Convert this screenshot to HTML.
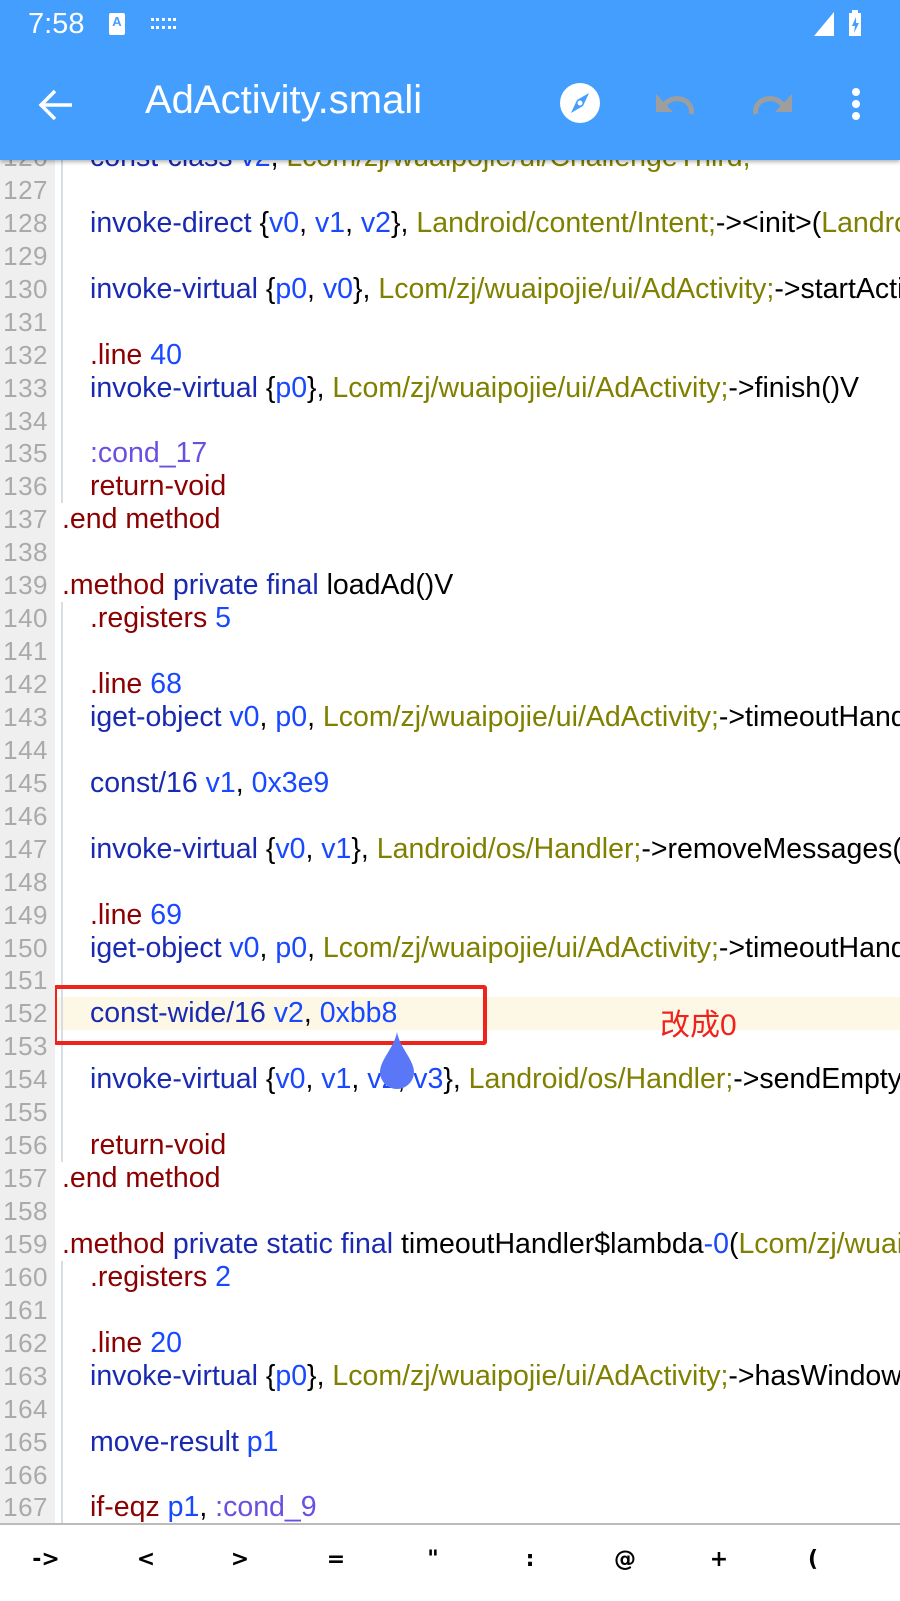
<!DOCTYPE html>
<html><head><meta charset="utf-8"><style>
body{margin:0;width:900px;height:1599px;overflow:hidden;background:#fff;font-family:"Liberation Sans","Noto Sans CJK SC",sans-serif;position:relative}
#code{position:absolute;left:0;top:141px;width:900px;overflow:hidden}
.ln{height:32.94px;line-height:32.94px;position:relative;white-space:nowrap;font-size:28.5px;overflow:hidden}
.n{position:absolute;left:0;width:55px;height:100%;background:#efefef;color:#aaa;font-size:26px;text-align:right;padding-right:7px;box-sizing:border-box;letter-spacing:0.5px;z-index:1}
.c{position:absolute;left:62px}
.i{left:90px}
.g:after{content:"";position:absolute;left:61px;top:0;width:2px;height:100%;background:#d6dde3}
.k{color:#1a2ab0}.r{color:#1848ff}.t{color:#808000}.d{color:#8b0000}.l{color:#6b4fe0}
.hl{background:#fdf8e6}
#bar{position:absolute;top:0;left:0;width:900px;height:160px;background:#439efe;box-shadow:0 2px 4px rgba(0,0,0,.3);z-index:5;color:#fff}
#keys{position:absolute;top:1523px;left:0;width:900px;height:76px;background:#fff;border-top:2px solid #bbb;z-index:5}
#keys span{position:absolute;top:22px;font-size:22px;font-weight:bold;transform:translateX(-50%);font-family:"DejaVu Sans",sans-serif}
</style></head><body>
<div id="bar">
<div style="position:absolute;left:28px;top:8px;font-size:29px">7:58</div>
<div style="position:absolute;left:109px;top:13px;width:16px;height:22px;background:#fff;border-radius:2px;color:#439efe;font-size:13px;font-weight:bold;text-align:center;line-height:18px">A</div>
<div style="position:absolute;left:151px;top:18px;width:25px;height:11px;border-top:3px dotted #fff;border-bottom:3px dotted #fff;box-sizing:border-box"></div>
<svg style="position:absolute;left:812px;top:10px" width="60" height="28"><polygon points="2,26 22,2 22,26" fill="#fff"/><rect x="37" y="3" width="12" height="23" fill="#fff"/><rect x="40" y="0" width="6" height="4" fill="#fff"/><polygon points="44,7 40,16 43,16 42,23 47,13 44,13" fill="#439efe"/></svg>
<svg style="position:absolute;left:36px;top:85px" width="40" height="40"><path d="M36 20H6M19 6L5 20l14 14" stroke="#fff" stroke-width="3.5" fill="none"/></svg>
<div style="position:absolute;left:145px;top:78px;font-size:40px">AdActivity.smali</div>
<svg style="position:absolute;left:560px;top:83px" width="40" height="40"><circle cx="20" cy="20" r="20" fill="#fff"/><polygon points="29,10 23,23 11,30 17,17" fill="#439efe"/><circle cx="20" cy="20" r="2.5" fill="#fff"/></svg>
<svg style="position:absolute;left:655px;top:92px" width="45" height="24"><path d="M36 22 A14 12 0 0 0 8 16" stroke="#9e9e9e" stroke-width="5" fill="none"/><polygon points="1,2 1,20 18,20" fill="#9e9e9e"/></svg>
<svg style="position:absolute;left:750px;top:92px" width="45" height="24"><path d="M6 22 A14 12 0 0 1 34 16" stroke="#9e9e9e" stroke-width="5" fill="none"/><polygon points="42,2 42,20 25,20" fill="#9e9e9e"/></svg>
<svg style="position:absolute;left:850px;top:86px" width="12" height="36"><circle cx="6" cy="6" r="4" fill="#fff"/><circle cx="6" cy="18" r="4" fill="#fff"/><circle cx="6" cy="30" r="4" fill="#fff"/></svg>
</div>
<div id="code">
<div class="ln g"><div class="n">126</div><div class="c i"><span class="k">const-class</span> <span class="r">v2</span>, <span class="t">Lcom/zj/wuaipojie/ui/ChallengeThird;</span></div></div>
<div class="ln g"><div class="n">127</div></div>
<div class="ln g"><div class="n">128</div><div class="c i"><span class="k">invoke-direct</span> {<span class="r">v0</span>, <span class="r">v1</span>, <span class="r">v2</span>}, <span class="t">Landroid/content/Intent;</span>-&gt;&lt;init&gt;(<span class="t">Landroid/content/Context;</span></div></div>
<div class="ln g"><div class="n">129</div></div>
<div class="ln g"><div class="n">130</div><div class="c i"><span class="k">invoke-virtual</span> {<span class="r">p0</span>, <span class="r">v0</span>}, <span class="t">Lcom/zj/wuaipojie/ui/AdActivity;</span>-&gt;startActivity</div></div>
<div class="ln g"><div class="n">131</div></div>
<div class="ln g"><div class="n">132</div><div class="c i"><span class="d">.line</span> <span class="r">40</span></div></div>
<div class="ln g"><div class="n">133</div><div class="c i"><span class="k">invoke-virtual</span> {<span class="r">p0</span>}, <span class="t">Lcom/zj/wuaipojie/ui/AdActivity;</span>-&gt;finish()V</div></div>
<div class="ln g"><div class="n">134</div></div>
<div class="ln g"><div class="n">135</div><div class="c i"><span class="l">:cond_17</span></div></div>
<div class="ln g"><div class="n">136</div><div class="c i"><span class="d">return-void</span></div></div>
<div class="ln"><div class="n">137</div><div class="c"><span class="d">.end method</span></div></div>
<div class="ln"><div class="n">138</div></div>
<div class="ln"><div class="n">139</div><div class="c"><span class="d">.method</span> <span class="k">private final</span> loadAd()V</div></div>
<div class="ln g"><div class="n">140</div><div class="c i"><span class="d">.registers</span> <span class="r">5</span></div></div>
<div class="ln g"><div class="n">141</div></div>
<div class="ln g"><div class="n">142</div><div class="c i"><span class="d">.line</span> <span class="r">68</span></div></div>
<div class="ln g"><div class="n">143</div><div class="c i"><span class="k">iget-object</span> <span class="r">v0</span>, <span class="r">p0</span>, <span class="t">Lcom/zj/wuaipojie/ui/AdActivity;</span>-&gt;timeoutHandler</div></div>
<div class="ln g"><div class="n">144</div></div>
<div class="ln g"><div class="n">145</div><div class="c i"><span class="k">const/16</span> <span class="r">v1</span>, <span class="r">0x3e9</span></div></div>
<div class="ln g"><div class="n">146</div></div>
<div class="ln g"><div class="n">147</div><div class="c i"><span class="k">invoke-virtual</span> {<span class="r">v0</span>, <span class="r">v1</span>}, <span class="t">Landroid/os/Handler;</span>-&gt;removeMessages(I)V</div></div>
<div class="ln g"><div class="n">148</div></div>
<div class="ln g"><div class="n">149</div><div class="c i"><span class="d">.line</span> <span class="r">69</span></div></div>
<div class="ln g"><div class="n">150</div><div class="c i"><span class="k">iget-object</span> <span class="r">v0</span>, <span class="r">p0</span>, <span class="t">Lcom/zj/wuaipojie/ui/AdActivity;</span>-&gt;timeoutHandler</div></div>
<div class="ln g"><div class="n">151</div></div>
<div class="ln g hl"><div class="n">152</div><div class="c i"><span class="k">const-wide/16</span> <span class="r">v2</span>, <span class="r">0xbb8</span></div></div>
<div class="ln g"><div class="n">153</div></div>
<div class="ln g"><div class="n">154</div><div class="c i"><span class="k">invoke-virtual</span> {<span class="r">v0</span>, <span class="r">v1</span>, <span class="r">v2</span>, <span class="r">v3</span>}, <span class="t">Landroid/os/Handler;</span>-&gt;sendEmptyMessage</div></div>
<div class="ln g"><div class="n">155</div></div>
<div class="ln g"><div class="n">156</div><div class="c i"><span class="d">return-void</span></div></div>
<div class="ln"><div class="n">157</div><div class="c"><span class="d">.end method</span></div></div>
<div class="ln"><div class="n">158</div></div>
<div class="ln"><div class="n">159</div><div class="c"><span class="d">.method</span> <span class="k">private static final</span> timeoutHandler$lambda<span class="r">-0</span>(<span class="t">Lcom/zj/wuaipojie</span></div></div>
<div class="ln g"><div class="n">160</div><div class="c i"><span class="d">.registers</span> <span class="r">2</span></div></div>
<div class="ln g"><div class="n">161</div></div>
<div class="ln g"><div class="n">162</div><div class="c i"><span class="d">.line</span> <span class="r">20</span></div></div>
<div class="ln g"><div class="n">163</div><div class="c i"><span class="k">invoke-virtual</span> {<span class="r">p0</span>}, <span class="t">Lcom/zj/wuaipojie/ui/AdActivity;</span>-&gt;hasWindowFocus</div></div>
<div class="ln g"><div class="n">164</div></div>
<div class="ln g"><div class="n">165</div><div class="c i"><span class="k">move-result</span> <span class="r">p1</span></div></div>
<div class="ln g"><div class="n">166</div></div>
<div class="ln g"><div class="n">167</div><div class="c i"><span class="d">if-eqz</span> <span class="r">p1</span>, <span class="l">:cond_9</span></div></div>
</div>
<div style="position:absolute;left:53px;top:985px;width:434px;height:60px;border:4px solid #f0231c;border-radius:3px;box-sizing:border-box"></div>
<div style="position:absolute;left:660px;top:1000px;font-size:30px;color:#f0231c">改成0</div>
<svg style="position:absolute;left:376px;top:1030px" width="42" height="60"><path d="M21 2 C24 18 38 30 38 42 A17 17 0 0 1 4 42 C4 30 18 18 21 2Z" fill="#5a77f8"/></svg>
<div id="keys"><span style="left:46px">-&gt;</span><span style="left:146px">&lt;</span><span style="left:240px">&gt;</span><span style="left:336px">=</span><span style="left:433px">"</span><span style="left:530px">:</span><span style="left:625px">@</span><span style="left:719px">+</span><span style="left:813px">(</span></div>
</body></html>
